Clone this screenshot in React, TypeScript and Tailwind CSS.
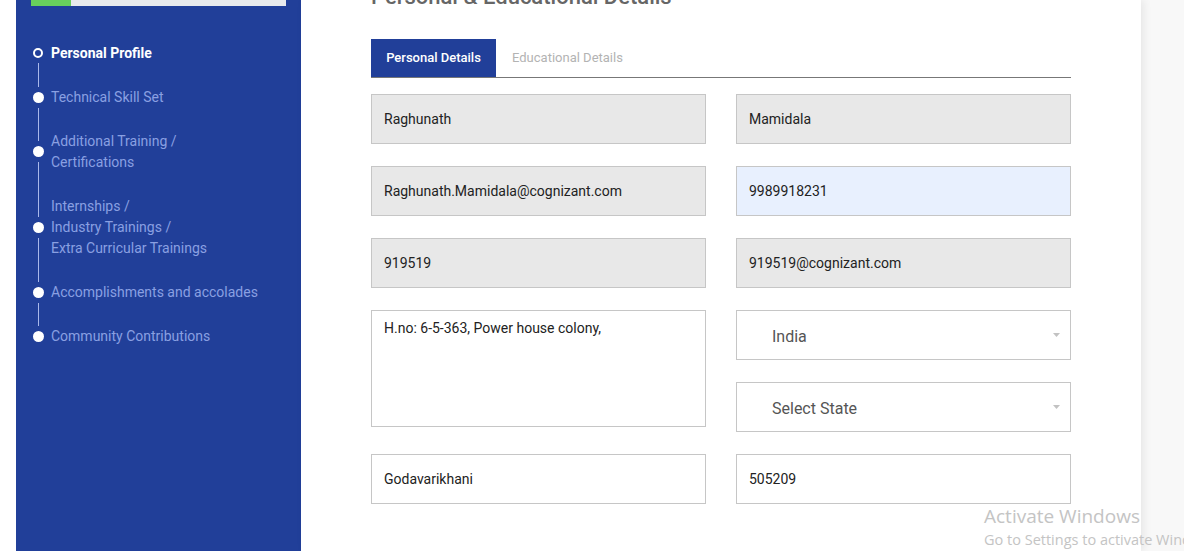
import React from "react";

interface StepItem {
  lines: string[];
  active?: boolean;
}

const steps: StepItem[] = [
  { lines: ["Personal Profile"], active: true },
  { lines: ["Technical Skill Set"] },
  { lines: ["Additional Training /", "Certifications"] },
  { lines: ["Internships /", "Industry Trainings /", "Extra Curricular Trainings"] },
  { lines: ["Accomplishments and accolades"] },
  { lines: ["Community Contributions"] },
];

const Field: React.FC<{ value: string; filled?: boolean; autofill?: boolean }> = ({ value, filled, autofill }) => (
  <div
    className={`h-[50px] border border-[#c6c6c6] flex items-center pl-3 text-[14px] text-[#222] ${
      autofill ? "bg-[#e8f0fe]" : filled ? "bg-[#e8e8e8]" : "bg-white"
    }`}
  >
    {value}
  </div>
);

const SelectBox: React.FC<{ label: string }> = ({ label }) => (
  <div className="h-[50px] border border-[#c6c6c6] bg-white flex items-center justify-between pl-[35px] pr-[10px]">
    <span className="pt-[3px] text-[16px] text-[#555]">{label}</span>
    <svg width="7" height="4" viewBox="0 0 7 4">
      <path d="M0 0 L7 0 L3.5 4 Z" fill="#c2c2c2" />
    </svg>
  </div>
);

const Sidebar: React.FC = () => (
  <aside className="w-[285px] shrink-0 bg-[#213f99] px-[15px]">
    {/* progress */}
    <div className="h-[6px] bg-[#e8eaed] flex">
      <div className="w-[40px] bg-[#68cf5c]" />
    </div>

    <nav className="mt-[25px] flex flex-col">
      {steps.map((s, i) => (
        <div key={i} className="flex items-stretch">
          <div className="w-[10px] ml-[2px] flex flex-col items-center">
            <div className={`flex-1 w-px mb-[5px] ${i === 0 ? "" : "bg-[#a9b8ea]"}`} />
            {s.active ? (
              <div className="w-[10px] h-[10px] rounded-full border-2 border-white shrink-0" />
            ) : (
              <div className="w-[11px] h-[11px] rounded-full bg-white shrink-0" />
            )}
            <div className={`flex-1 w-px mt-[5px] ${i === steps.length - 1 ? "" : "bg-[#a9b8ea]"}`} />
          </div>
          <div
            className={`ml-[8px] py-[11.5px] text-[14px] leading-[21px] ${
              s.active ? "text-white font-bold" : "text-[#8aa0e2]"
            }`}
          >
            {s.lines.map((l) => (
              <div key={l}>{l}</div>
            ))}
          </div>
        </div>
      ))}
    </nav>
  </aside>
);

export default function App() {
  return (
    <div
      className="relative flex h-[551px] w-[1184px] overflow-hidden bg-[#f8f8f8]"
      style={{ fontFamily: "Roboto, 'Liberation Sans', sans-serif" }}
    >
      <div className="w-4 shrink-0 bg-white" />
      <Sidebar />

      <main className="w-[840px] shrink-0 bg-white pl-[70px] shadow-[3px_0_8px_rgba(0,0,0,0.07)]">
        <div className="w-[700px]">
          <div className="h-[39px]">
            <h1 className="relative -top-[16px] text-[22px] leading-[26px] font-medium text-[#666]">
              Personal &amp; Educational Details
            </h1>
          </div>

          {/* tabs */}
          <div className="flex h-[39px] border-b border-[#777]">
            <div className="w-[125px] bg-[#213f99] text-white text-[13px] font-medium flex items-center justify-center">
              Personal Details
            </div>
            <div className="pl-4 text-[13px] text-[#b3b3b3] flex items-center">Educational Details</div>
          </div>

          {/* form */}
          <div className="mt-4 grid grid-cols-2 gap-x-[30px] gap-y-[22px]">
            <Field value="Raghunath" filled />
            <Field value="Mamidala" filled />
            <Field value="Raghunath.Mamidala@cognizant.com" filled />
            <Field value="9989918231" autofill />
            <Field value="919519" filled />
            <Field value="919519@cognizant.com" filled />
            <div className="row-span-2 h-[117px] border border-[#c6c6c6] bg-white pl-3 pt-[7px] text-[14px] text-[#222]">
              H.no: 6-5-363, Power house colony,
            </div>
            <SelectBox label="India" />
            <SelectBox label="Select State" />
            <Field value="Godavarikhani" />
            <Field value="505209" />
          </div>
        </div>
      </main>

      {/* windows watermark */}
      <div
        className="absolute left-[984px] top-[504px] text-[#c4c4c4] whitespace-nowrap"
        style={{ fontFamily: "'Open Sans', 'Noto Sans', sans-serif" }}
      >
        <div className="text-[19px] leading-[25px]">Activate Windows</div>
        <div className="text-[14.5px] leading-[20px] mt-[1px]">Go to Settings to activate Windows.</div>
      </div>
    </div>
  );
}
